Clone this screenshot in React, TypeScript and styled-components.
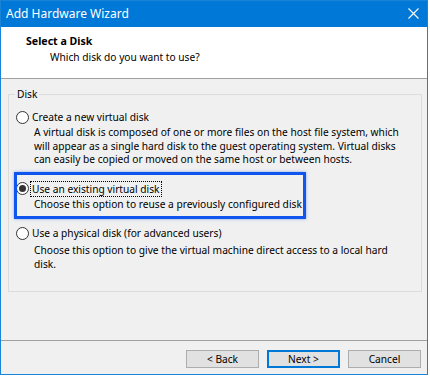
import styled, { createGlobalStyle } from "styled-components"

const GlobalStyle = createGlobalStyle`
  html, body {
    margin: 0;
    padding: 0;
    background: #ffffff;
  }
  body {
    font-family: "Noto Sans", "Open Sans", sans-serif;
    font-size: 10.2px;
    color: #000;
  }
`

type DiskOption = {
  label: string
  lines: string[]
  checked: boolean
  focused: boolean
  descOffset: number
}

const options: DiskOption[] = [
  {
    label: "Create a new virtual disk",
    lines: [
      "A virtual disk is composed of one or more files on the host file system, which",
      "will appear as a single hard disk to the guest operating system. Virtual disks",
      "can easily be copied or moved on the same host or between hosts.",
    ],
    checked: false,
    focused: false,
    descOffset: 1,
  },
  {
    label: "Use an existing virtual disk",
    lines: ["Choose this option to reuse a previously configured disk"],
    checked: true,
    focused: true,
    descOffset: 1,
  },
  {
    label: "Use a physical disk (for advanced users)",
    lines: [
      "Choose this option to give the virtual machine direct access to a local hard",
      "disk.",
    ],
    checked: false,
    focused: false,
    descOffset: 3,
  },
]

const CloseIcon = () => (
  <svg width="11" height="11" viewBox="0 0 11 11">
    <path d="M0.5 0.5 L10.5 10.5 M10.5 0.5 L0.5 10.5" stroke="#fff" strokeWidth="1.1" />
  </svg>
)

export default function App() {
  return (
    <>
      <GlobalStyle />
      <Window>
        <TitleBar>
          <TitleText>Add Hardware Wizard</TitleText>
          <CloseButton>
            <CloseIcon />
          </CloseButton>
        </TitleBar>
        <Header>
          <HeaderTitle>Select a Disk</HeaderTitle>
          <HeaderSub>Which disk do you want to use?</HeaderSub>
        </Header>
        <Body>
          <GroupBox>
            <Legend>Disk</Legend>
            {options.map((o) => (
              <Option key={o.label}>
                <OptionRow>
                  <Radio $checked={o.checked} />
                  <OptionLabel $focused={o.focused}>{o.label}</OptionLabel>
                </OptionRow>
                <Description $offset={o.descOffset}>
                  {o.lines.map((l) => (
                    <div key={l}>{l}</div>
                  ))}
                </Description>
              </Option>
            ))}
            <Highlight />
          </GroupBox>
        </Body>
        <Footer>
          <Button>&lt; Back</Button>
          <Button $primary>Next &gt;</Button>
          <Button>Cancel</Button>
        </Footer>
      </Window>
    </>
  )
}

const Window = styled.div`
  width: 428px;
  height: 375px;
  box-sizing: border-box;
  border: 1px solid #1883d7;
  background: #f0f0f0;
  display: flex;
  flex-direction: column;
`

const TitleBar = styled.div`
  height: 26px;
  background: #0078d7;
  display: flex;
  align-items: center;
  justify-content: space-between;
  padding: 0 8px 0 5px;
`

const TitleText = styled.span`
  color: #fff;
  font-size: 12px;
  line-height: 14px;
`

const CloseButton = styled.span`
  display: flex;
  margin-top: -2px;
`

const Header = styled.div`
  height: 52px;
  background: #fff;
  border-bottom: 1px solid #a0a0a0;
  padding: 7px 0 0 25px;
  box-sizing: border-box;
`

const HeaderTitle = styled.div`
  font-weight: bold;
  font-size: 10.6px;
  line-height: 14px;
`

const HeaderSub = styled.div`
  margin: 2px 0 0 24px;
  line-height: 14px;
`

const Body = styled.div`
  flex: 1;
  padding: 15px 5px 0 7px;
`

const GroupBox = styled.div`
  position: relative;
  height: 198px;
  box-sizing: border-box;
  border: 1px solid #dcdcdc;
  padding: 14px 0 0 7px;
`

const Legend = styled.span`
  position: absolute;
  top: -8px;
  left: 6px;
  padding: 0 2px;
  background: #f0f0f0;
  line-height: 14px;
`

const Option = styled.div`
  margin-bottom: 14px;
`

const OptionRow = styled.div`
  display: flex;
  align-items: center;
  height: 16px;
`

const Radio = styled.span<{ $checked: boolean }>`
  width: 13px;
  height: 13px;
  box-sizing: border-box;
  border: 1px solid #333;
  border-radius: 50%;
  background: #fff;
  display: flex;
  align-items: center;
  justify-content: center;
  margin-right: 2px;
  &::after {
    content: "";
    width: 7px;
    height: 7px;
    border-radius: 50%;
    background: ${(p) => (p.$checked ? "#333" : "transparent")};
  }
`

const OptionLabel = styled.span<{ $focused: boolean }>`
  line-height: 14px;
  padding: 0 1px;
  outline: ${(p) => (p.$focused ? "1px dotted #000" : "none")};
`

const Description = styled.div<{ $offset: number }>`
  margin: ${(p) => p.$offset}px 0 0 18px;
  line-height: 13.5px;
`

const Highlight = styled.div`
  position: absolute;
  left: 5px;
  top: 77px;
  width: 292px;
  height: 47px;
  box-sizing: border-box;
  border: 3px solid #0f55ee;
  box-shadow: 0 0 3px rgba(15, 85, 238, 0.45);
  pointer-events: none;
`

const Footer = styled.div`
  height: 34px;
  box-sizing: border-box;
  border-top: 1px solid #a0a0a0;
  display: flex;
  justify-content: flex-end;
  align-items: flex-start;
  gap: 8px;
  padding: 9px 6px 0 0;
`

const Button = styled.button<{ $primary?: boolean }>`
  width: 73px;
  height: 18px;
  box-sizing: border-box;
  background: #e1e1e1;
  border: ${(p) => (p.$primary ? "2px solid #0078d7" : "1px solid #adadad")};
  font-family: inherit;
  font-size: 10.2px;
  color: #000;
  padding: 0;
  display: flex;
  align-items: center;
  justify-content: center;
`
